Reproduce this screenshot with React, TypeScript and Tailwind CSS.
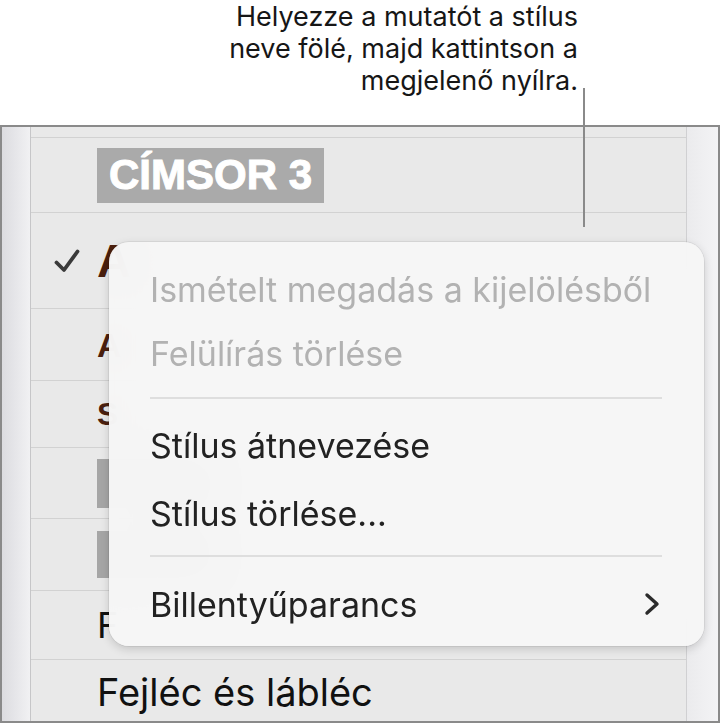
import React from "react";

const Check = () => (
  <svg width="28" height="28" viewBox="0 0 28 28" fill="none">
    <path d="M3.5 15.5 L11 23 L24.5 4.5" stroke="#3a3a3a" strokeWidth="3.8" strokeLinecap="round" strokeLinejoin="round" />
  </svg>
);

const Chevron = () => (
  <svg width="20" height="26" viewBox="0 0 20 26" fill="none">
    <path d="M5 4 L15 13 L5 22" stroke="#2b2b2b" strokeWidth="3.4" strokeLinecap="round" strokeLinejoin="round" />
  </svg>
);

export default function App() {
  return (
    <div className="relative w-[721px] h-[726px] bg-white overflow-hidden" style={{ fontFamily: "Inter, 'Liberation Sans', sans-serif" }}>
      {/* annotation */}
      <div className="h-[125px] pr-[143px] pt-[1px] text-right text-[27px] leading-[32px] text-[#161616]">
        <div>Helyezze a mutatót a stílus</div>
        <div>neve fölé, majd kattintson a</div>
        <div>megjelenő nyílra.</div>
      </div>

      {/* frame */}
      <div className="w-[720px] h-[598px] border-2 border-[#8a8a8a] flex">
        <div className="w-[29px] h-full bg-gradient-to-r from-[#dcdce0] to-[#f1f1f3] border-r border-[#c6c6c8]" />
        <div className="flex-1 h-full bg-[#e9e9e9] flex flex-col">
          <div className="h-[11px] border-b border-[#d2d2d2]" />
          <div className="h-[75px] border-b border-[#d2d2d2] flex items-center pl-[66px]">
            <div className="bg-[#aaaaaa] h-[55px] px-[12px] flex items-center text-white font-bold text-[42px] leading-none [-webkit-text-stroke:1px_white]" style={{ fontFamily: "'Liberation Sans', Arial, sans-serif" }}>
              CÍMSOR 3
            </div>
          </div>
          <div className="h-[96px] border-b border-[#d2d2d2] flex items-center pl-[22px]">
            <div className="w-[44px]"><Check /></div>
            <div className="text-[47px] font-bold text-[#4a1f0e] leading-none" style={{ fontFamily: "'Liberation Sans', Arial, sans-serif" }}>A</div>
          </div>
          <div className="h-[72px] border-b border-[#d2d2d2] flex items-center pl-[66px]">
            <div className="text-[34px] font-bold text-[#4a1f0e] leading-none" style={{ fontFamily: "'Liberation Sans', Arial, sans-serif" }}>A</div>
          </div>
          <div className="h-[67px] border-b border-[#d2d2d2] flex items-center pl-[66px]">
            <div className="text-[32px] font-bold text-[#4a1f0e] leading-none" style={{ fontFamily: "'Liberation Sans', Arial, sans-serif" }}>S</div>
          </div>
          <div className="h-[71px] border-b border-[#d2d2d2] flex items-center pl-[66px]">
            <div className="bg-[#a6a6a6] h-[49px] w-[120px]" />
          </div>
          <div className="h-[72px] border-b border-[#d2d2d2] flex items-center pl-[66px]">
            <div className="bg-[#a6a6a6] h-[47px] w-[120px]" />
          </div>
          <div className="h-[69px] border-b border-[#d2d2d2] flex items-center pl-[66px]">
            <div className="text-[36px] text-[#111] leading-none">F</div>
          </div>
          <div className="flex-1 flex items-center pl-[66px] pt-[3px]">
            <div className="text-[38px] text-[#111] leading-none">Fejléc és lábléc</div>
          </div>
        </div>
        <div className="w-[32px] h-full bg-gradient-to-r from-[#ebebed] to-[#f3f3f5] border-l border-[#d0d0d2]" />
      </div>

      {/* callout line */}
      <div className="absolute left-[583px] top-[88px] w-[2px] h-[139px] bg-[#8a8a8a]" />

      {/* context menu */}
      <div className="absolute left-[109px] top-[242px] w-[595px] h-[404px] rounded-[20px] bg-[#f6f6f6]/[0.97] backdrop-blur-[20px] shadow-[0_3px_10px_rgba(0,0,0,0.16),0_0_0_1px_rgba(0,0,0,0.06)] pl-[41px] pr-[42px] pt-[15px] flex flex-col text-[34px]">
        <div className="h-[64px] flex items-center text-[#b2b2b2]">Ismételt megadás a kijelölésből</div>
        <div className="h-[64px] flex items-center text-[#b2b2b2]">Felülírás törlése</div>
        <div className="mt-[12px] h-[2px] bg-[#dedede]" />
        <div className="mt-[13px] h-[66px] flex items-center text-[#222]">Stílus átnevezése</div>
        <div className="h-[70px] flex items-center text-[#222]">Stílus törlése...</div>
        <div className="mt-[7px] h-[2px] bg-[#dedede]" />
        <div className="mt-[15px] h-[64px] flex items-center justify-between text-[#222]">
          <span>Billentyűparancs</span>
          <Chevron />
        </div>
      </div>
    </div>
  );
}
